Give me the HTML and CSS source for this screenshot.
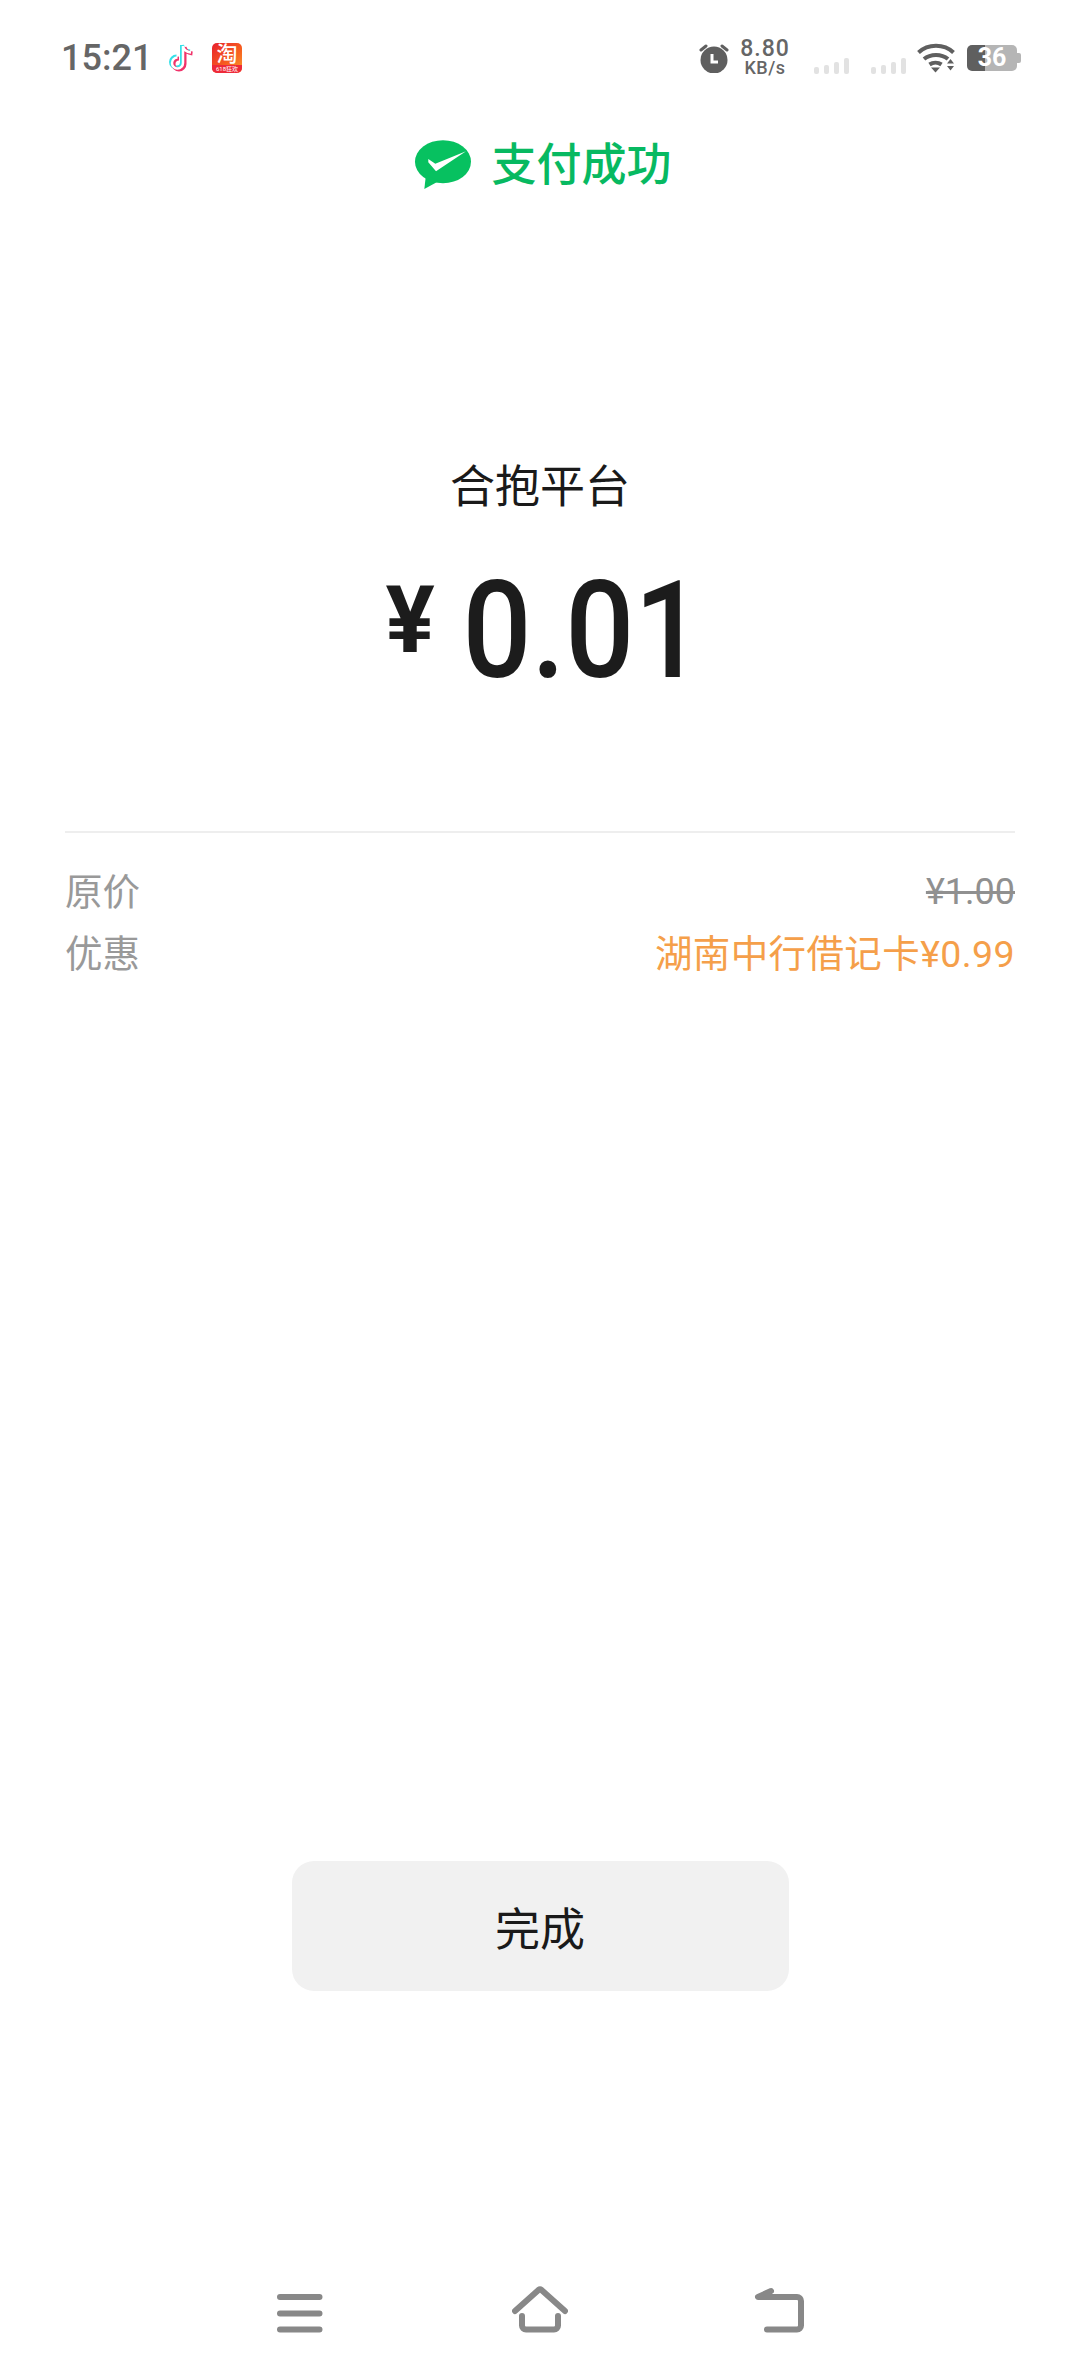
FILE: index.html
```html
<!DOCTYPE html>
<html lang="zh-CN">
<head>
    <meta charset="UTF-8">
    <meta name="viewport" content="width=device-width, initial-scale=1.0">
    <title>支付成功</title>
    <link rel="stylesheet" href="styles.css">
</head>
<body>
    <div class="page">
        <!-- Status bar -->
        <header class="status">
            <div class="status-left">
                <span class="time">15:21</span>
                <svg class="tiktok" width="28" height="30" viewBox="0 0 28 30" fill="none" stroke-width="4">
                    <path d="M15 3v17a5.500 5.500 0 1 1-5.500-5.500M15 3c.5 3.500 3.500 6 8 6.500" stroke="#35e0e8" transform="translate(-1 -1)"/>
                    <path d="M15 3v17a5.500 5.500 0 1 1-5.500-5.500M15 3c.5 3.500 3.500 6 8 6.500" stroke="#f0336a" transform="translate(1.500 1)"/>
                    <path d="M15 3v17a5.500 5.500 0 1 1-5.500-5.500M15 3c.5 3.500 3.500 6 8 6.500" stroke="#fff" stroke-width="2.500"/>
                </svg>
                <div class="taobao">
                    <span class="taobao-mark">淘</span>
                    <span class="taobao-tag">618狂欢</span>
                </div>
            </div>
            <div class="status-right">
                <svg class="alarm" width="30" height="30" viewBox="0 0 30 30">
                    <circle cx="15" cy="17" r="13.500" fill="#5f5f5f"/>
                    <path d="M2 7l5-4M28 7l-5-4" stroke="#5f5f5f" stroke-width="3" stroke-linecap="round"/>
                    <path d="M13 11v8h6" fill="none" stroke="#fff" stroke-width="3"/>
                </svg>
                <div class="speed">
                    <span class="speed-value">8.80</span>
                    <span class="speed-unit">KB/s</span>
                </div>
                <div class="signal">
                    <i class="bar-1"></i><i class="bar-2"></i><i class="bar-3"></i><i class="bar-4"></i>
                </div>
                <div class="signal">
                    <i class="bar-1"></i><i class="bar-2"></i><i class="bar-3"></i><i class="bar-4"></i>
                </div>
                <svg class="wifi" width="38" height="30" viewBox="0 0 38 30" fill="none" stroke="#5f5f5f" stroke-width="4">
                    <path d="M1.500 9.500C11 .5 27 .5 36.500 9.500"/>
                    <path d="M7 16c6.500-5.500 17.500-5.500 24 0"/>
                    <path d="M12.500 21.500c3.500-2.500 8.500-2.500 12 0"/>
                    <path d="M14 24.500h9L18.500 29.500z" fill="#5f5f5f" stroke="none"/>
                    <path d="M30 20.500h7L33.500 16zM30 23h7L33.500 27.500z" fill="#5f5f5f" stroke="none"/>
                </svg>
                <div class="battery">36</div>
            </div>
        </header>

        <main class="main">
            <div class="result">
                <svg class="wechat-pay" width="58" height="54" viewBox="0 0 58 54">
                    <ellipse cx="29" cy="22.700" rx="28" ry="21.500" fill="#07c160"/>
                    <path d="M12 36L10.300 50 25 42z" fill="#07c160"/>
                    <path d="M14.300 20l7 4.700L52 12.300 22 32.300l-7.700-9z" fill="#fff"/>
                </svg>
                <span class="result-text">支付成功</span>
            </div>

            <div class="merchant">合抱平台</div>
            <div class="amount">
                <span class="amount-sign">¥</span>
                <span class="amount-value">0.01</span>
            </div>

            <div class="details">
                <div class="detail-row">
                    <span>原价</span>
                    <span class="price-old">¥1.00</span>
                </div>
                <div class="detail-row">
                    <span>优惠</span>
                    <span class="price-off">湖南中行借记卡¥0.99</span>
                </div>
            </div>

            <button class="done">完成</button>
        </main>

        <!-- Navigation bar -->
        <nav class="nav">
            <svg width="56" height="55" viewBox="0 0 56 55" class="nav-icon">
                <path d="M8 15h39.500M8 31.400h39.500M8 47.500h39.500"/>
            </svg>
            <svg width="56" height="55" viewBox="0 0 56 55" class="nav-icon">
                <path d="M3 29L26.500 8a2.500 2.500 0 0 1 3 0L53 29"/>
                <path d="M10 34v9.500a4 4 0 0 0 4 4h28a4 4 0 0 0 4-4V34"/>
            </svg>
            <svg width="56" height="55" viewBox="0 0 56 55" class="nav-icon">
                <path d="M19 9L6 15h39a4 4 0 0 1 4 4v24.500a4 4 0 0 1-4 4H15"/>
            </svg>
        </nav>
    </div>
</body>
</html>
```

FILE: styles.css
```css
body {
    margin: 0;
    background-color: #fff;
    font-family: Roboto, "Noto Sans CJK SC", sans-serif;
    color: #1a1a1a;
}
.page {
    display: flex;
    flex-direction: column;
    height: 2376px;
}

/* status bar */
.status {
    display: flex;
    justify-content: space-between;
    align-items: center;
    height: 40px;
    padding: 38px 63px 0 61px;
    color: #666;
}
.status-left, .status-right {
    display: flex;
    align-items: center;
}
.time {
    width: 107px;
    font-size: 36px;
    font-weight: 500;
}
.tiktok {
    margin-right: 16px;
}
.taobao {
    display: flex;
    flex-direction: column;
    align-items: center;
    justify-content: space-between;
    width: 30px;
    height: 30px;
    border-radius: 5px;
    overflow: hidden;
    background: linear-gradient(135deg, #e8202e, #f7611f 60%, #f9a12f);
    color: #fff;
}
.taobao-mark {
    font-size: 21px;
    font-weight: 500;
    line-height: 22px;
}
.taobao-tag {
    width: 100%;
    font-size: 6px;
    line-height: 8px;
    text-align: center;
    background-color: #ee2a3a;
}
.alarm {
    margin-right: 11px;
}
.speed {
    display: flex;
    flex-direction: column;
    align-items: center;
    width: 50px;
    margin-right: 2px;
    font-weight: 500;
}
.speed-value {
    font-size: 23px;
    line-height: 20px;
    letter-spacing: 1px;
}
.speed-unit {
    font-size: 18px;
    line-height: 18px;
    letter-spacing: 0.5px;
}
.signal {
    display: flex;
    align-items: flex-end;
    gap: 5px;
    height: 30px;
    margin-left: 22px;
}
.signal i {
    width: 5px;
    margin-bottom: -1px;
    border-radius: 2px;
    background-color: #e2e2e2;
}
.bar-1 { height: 7px; }
.bar-2 { height: 9px; }
.bar-3 { height: 12px; }
.bar-4 { height: 16px; }
.wifi {
    margin-left: 11px;
    margin-right: 12px;
}
.battery {
    position: relative;
    width: 50px;
    height: 26px;
    border-radius: 5px;
    background: linear-gradient(90deg, #5f5f5f 36%, #b5b5b5 36%);
    color: #fff;
    font-size: 25px;
    font-weight: 700;
    line-height: 26px;
    text-align: center;
}
.battery::after {
    content: "";
    position: absolute;
    right: -4px;
    top: 8px;
    width: 4px;
    height: 10px;
    border-radius: 0 2px 2px 0;
    background-color: #b5b5b5;
}

/* payment result */
.main {
    display: flex;
    flex-direction: column;
    flex: 1;
}
.result {
    display: flex;
    justify-content: center;
    align-items: center;
    gap: 19px;
    height: 60px;
    margin-top: 58px;
    padding-left: 6px;
}
.result-text {
    font-size: 45px;
    font-weight: 500;
    line-height: 60px;
    color: #07b961;
}
.merchant {
    margin-top: 262px;
    font-size: 45px;
    line-height: 60px;
    text-align: center;
}
.amount {
    display: flex;
    justify-content: center;
    align-items: center;
    gap: 27px;
    height: 140px;
    margin-top: 43px;
    padding-left: 9px;
    color: #1c1c1c;
}
.amount-sign {
    margin-bottom: 22px;
    font-size: 92px;
    font-weight: 700;
}
.amount-value {
    margin: 0 -13px;
    font-size: 135px;
    font-weight: 500;
    transform: scaleX(0.9);
}
.details {
    margin: 130px 65px 0;
    padding-top: 28px;
    border-top: 2px solid #eee;
}
.detail-row {
    display: flex;
    justify-content: space-between;
    font-size: 37.5px;
    line-height: 62px;
    color: #999;
}
.price-old {
    font-size: 36px;
    text-decoration: line-through;
    color: #909090;
}
.price-off {
    letter-spacing: 0.4px;
    color: #f59f4a;
}
.done {
    align-self: center;
    width: 497px;
    height: 130px;
    margin-top: auto;
    border: none;
    border-radius: 22px;
    background-color: #f1f1f1;
    color: #1a1a1a;
    font-family: inherit;
    font-size: 45px;
}

/* navigation bar */
.nav {
    display: flex;
    justify-content: center;
    gap: 184px;
    margin-top: 291px;
    padding-bottom: 39px;
}
.nav-icon {
    fill: none;
    stroke: #888;
    stroke-width: 6;
    stroke-linecap: round;
    stroke-linejoin: round;
}
```
